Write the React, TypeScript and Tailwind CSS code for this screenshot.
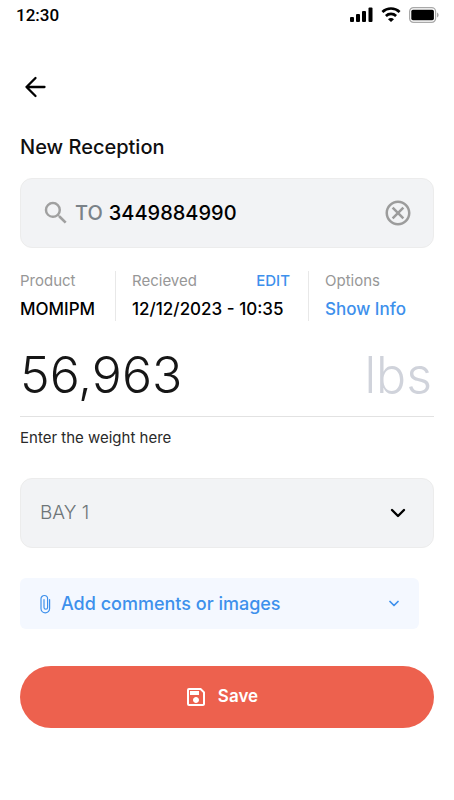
import { useState } from "react";
import { MdOutlineCancel, MdOutlineSave, MdSearch } from "react-icons/md";

function StatusBar() {
  return (
    <div className="flex h-[30px] items-center justify-between pr-[15px] pl-4">
      <span className="font-['Roboto'] text-[17px] leading-5 font-medium">12:30</span>
      <div className="flex items-center gap-2">
        <svg width="23" height="16" viewBox="0 0 23 16" fill="currentColor" aria-hidden="true">
          <rect x="0" y="10" width="4" height="5" rx="1" />
          <rect x="6" y="7" width="4" height="8" rx="1" />
          <rect x="12" y="4" width="4" height="11" rx="1" />
          <rect x="18.5" y="0.5" width="4" height="14.5" rx="1" />
        </svg>
        <svg width="20" height="16" viewBox="0 0 20 16" fill="none" aria-hidden="true">
          <path d="M1.4 4.9a12.6 12.6 0 0 1 17.2 0" stroke="currentColor" strokeWidth="2.7" />
          <path d="M4.9 9a7.4 7.4 0 0 1 10.2 0" stroke="currentColor" strokeWidth="2.7" />
          <path d="M10 15 7 12.2a4.2 4.2 0 0 1 6 0Z" fill="currentColor" />
        </svg>
        <svg width="30" height="16" viewBox="0 0 30 16" fill="none" aria-hidden="true">
          <rect x="0.6" y="0.6" width="26" height="14.8" rx="4" stroke="#a9a9a9" strokeWidth="1.2" />
          <rect x="2.3" y="2.8" width="22.6" height="10.4" rx="1.6" fill="currentColor" />
          <path d="M28 5.6c1 .5 1.6 1.4 1.6 2.4S29 9.9 28 10.4Z" fill="#a9a9a9" />
        </svg>
      </div>
    </div>
  );
}

function Paperclip() {
  return (
    <svg width="11" height="20" viewBox="0 0 11 20" fill="none" stroke="currentColor" strokeWidth="1.2" strokeLinecap="round" aria-hidden="true">
      <path d="M9.6 5.6V14.6a4.3 4.3 0 0 1-8.6 0V4.8a3.3 3.3 0 0 1 6.6 0V13.4a1.8 1.8 0 0 1-3.6 0V5.6" />
    </svg>
  );
}

export default function App() {
  const [order, setOrder] = useState("3449884990");
  const [weight, setWeight] = useState("56,963");

  return (
    <div className="min-h-screen bg-white font-['Inter',sans-serif] text-black">
      <StatusBar />

      <form className="px-5 pt-[42px] pb-12" onSubmit={(e) => e.preventDefault()}>
        <button type="button" aria-label="Back" className="block p-1">
          <svg width="22" height="22" viewBox="0 0 22 22" fill="none" stroke="currentColor" strokeWidth="2.3" strokeLinecap="round" strokeLinejoin="round" aria-hidden="true">
            <path d="M20.5 11H2.5M11.5 2l-9 9 9 9" />
          </svg>
        </button>

        <h1 className="mt-[31px] text-xl leading-7 font-medium text-[#0f0f10]">New Reception</h1>

        <div className="mt-[17px] flex h-[70px] items-center rounded-xl border border-[#ececec] bg-[#f2f3f5] px-5 text-xl">
          <MdSearch size={30} className="shrink-0 text-[#a0a0a0]" aria-hidden="true" />
          <label htmlFor="order" className="ml-1 font-medium text-[#7a8288]">
            TO
          </label>
          <input
            id="order"
            value={order}
            onChange={(e) => setOrder(e.target.value)}
            className="ml-1.5 min-w-0 flex-1 bg-transparent font-medium outline-none"
          />
          <button type="button" aria-label="Clear" onClick={() => setOrder("")}>
            <MdOutlineCancel size={30} className="text-[#9c9c9c]" />
          </button>
        </div>

        <div className="mt-[23px] grid grid-cols-[96fr_193fr_125fr] divide-x divide-[#e8e8e8]">
          <div>
            <p className="text-[15px] leading-5 text-[#979797]">Product</p>
            <p className="mt-1.5 text-[17px] leading-6 font-medium">MOMIPM</p>
          </div>
          <div className="pr-[18px] pl-4">
            <div className="flex items-center justify-between text-[15px] leading-5">
              <span className="text-[#979797]">Recieved</span>
              <button type="button" className="font-medium text-[#3d90ec]">
                EDIT
              </button>
            </div>
            <p className="mt-1.5 text-[17px] leading-6 font-medium whitespace-nowrap">12/12/2023 - 10:35</p>
          </div>
          <div className="pl-4">
            <p className="text-[15px] leading-5 text-[#979797]">Options</p>
            <button type="button" className="mt-1.5 block text-[17px] leading-6 font-medium text-[#3d90ec]">
              Show Info
            </button>
          </div>
        </div>

        <div className="mt-5 flex h-[76px] items-start border-b border-[#e2e2e2] pr-0.5 text-[50px] leading-[68px] font-light">
          <input
            id="weight"
            value={weight}
            onChange={(e) => setWeight(e.target.value)}
            className="h-[68px] w-0 flex-1 bg-transparent text-[#161616] outline-none"
          />
          <span className="text-[#d0d3db]">lbs</span>
        </div>
        <label htmlFor="weight" className="mt-[11px] block text-[15px] leading-5 text-[#2a2a2a]">
          Enter the weight here
        </label>

        <div className="relative mt-[30px]">
          <select
            aria-label="Bay"
            className="block h-[70px] w-full appearance-none rounded-xl border border-[#ececec] bg-[#f2f3f5] px-[19px] text-[19px] font-light text-[#6e7578] outline-none"
          >
            <option>BAY 1</option>
            <option>BAY 2</option>
            <option>BAY 3</option>
          </select>
          <svg width="16" height="10" viewBox="0 0 16 10" fill="none" stroke="currentColor" strokeWidth="2.4" strokeLinecap="round" strokeLinejoin="round" className="pointer-events-none absolute top-[30px] right-7" aria-hidden="true">
            <path d="M2 2l6 6 6-6" />
          </svg>
        </div>

        <div className="mt-[30px] pr-[15px]">
          <button
            type="button"
            className="flex h-[51px] w-full items-center rounded-md bg-[#f4f8ff] px-5 text-lg font-medium text-[#3d90ec]"
          >
            <Paperclip />
            <span className="ml-[10px]">Add comments or images</span>
            <svg width="10" height="7" viewBox="0 0 10 7" fill="none" stroke="currentColor" strokeWidth="1.7" strokeLinecap="round" strokeLinejoin="round" className="ml-auto" aria-hidden="true">
              <path d="M1 1.5l4 4 4-4" />
            </svg>
          </button>
        </div>

        <button
          type="submit"
          className="mt-[37px] flex h-[62px] w-full items-center justify-center gap-[10px] rounded-full bg-[#ed614e] pr-3 text-[17px] font-semibold text-white"
        >
          <MdOutlineSave size={24} aria-hidden="true" />
          Save
        </button>
      </form>
    </div>
  );
}
